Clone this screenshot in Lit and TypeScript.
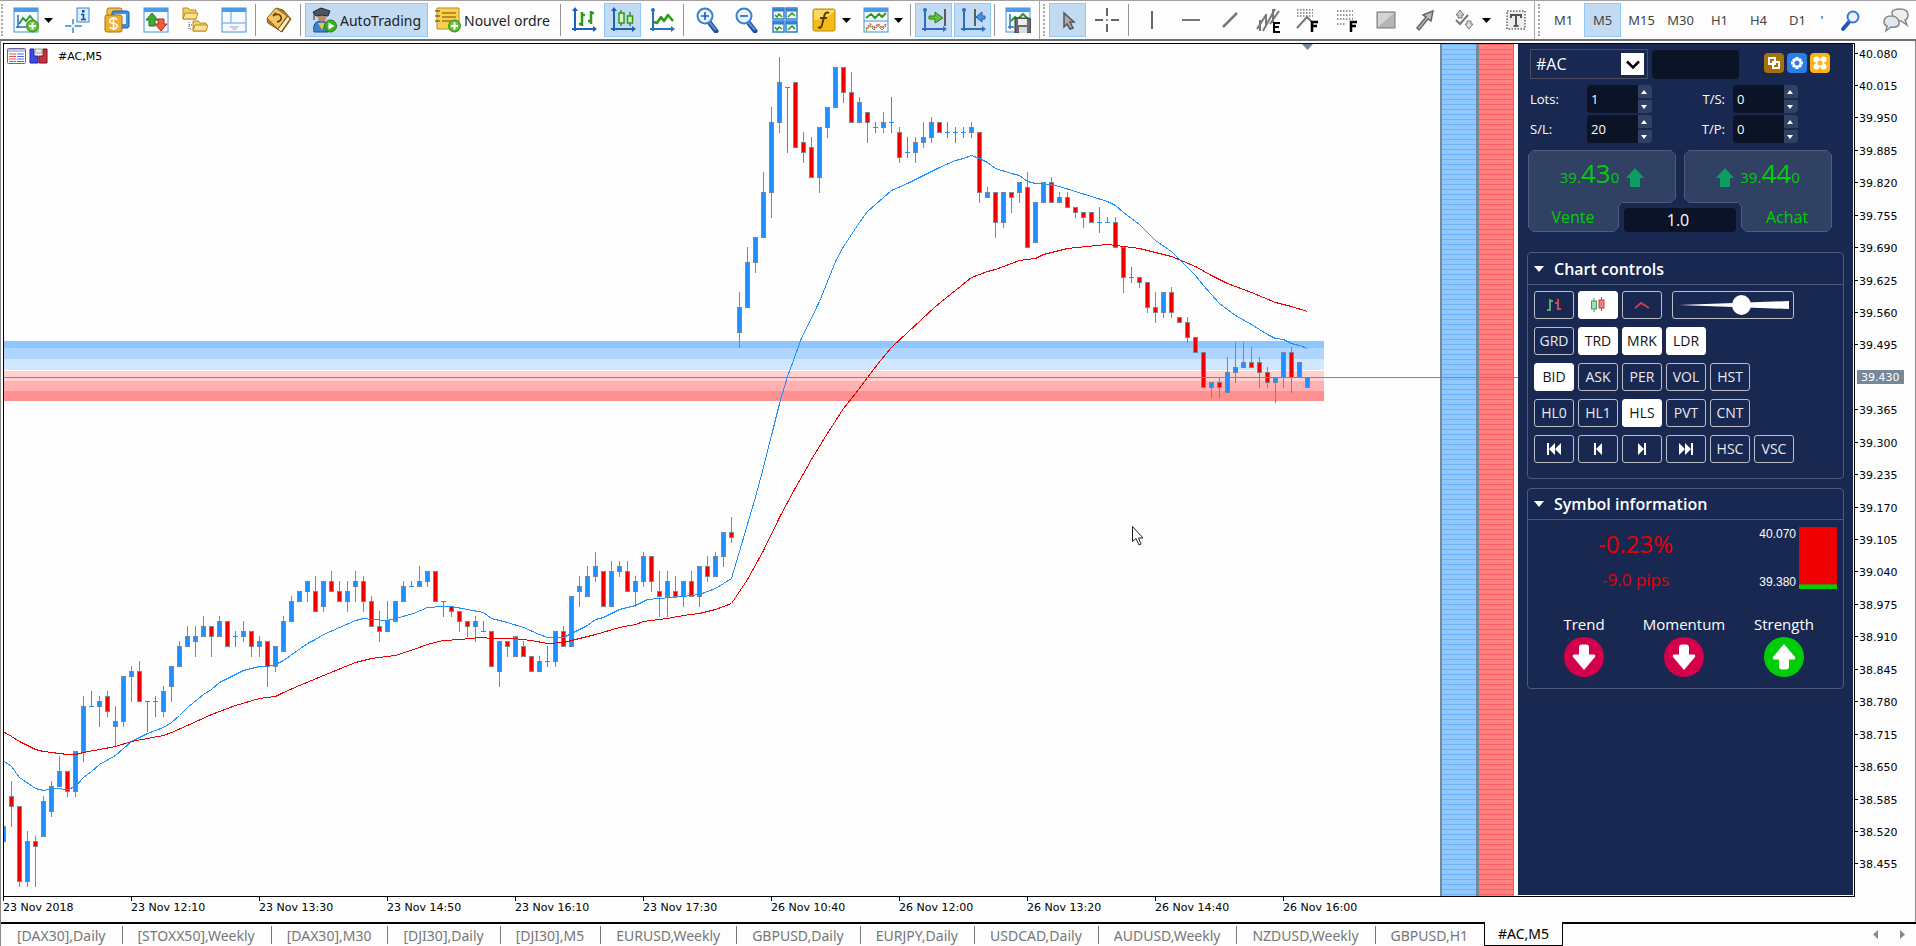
import { LitElement, html, svg, css } from "lit";
import { customElement } from "lit/decorators.js";
import { classMap } from "lit/directives/class-map.js";

/* One candle per 8 px. high, body top, body bottom, low: in ticks of 0.01 below 40.080; U rises, D falls. */
const CANDLES = `155 155 158 158 U|146 149 151 155 D|151 151 166 167 D|156 158 166 167 U|157 158 159 167 D|149 150 157 157 U|146 147 152 153 U|141 144 147 147 U|144 144 148 149 D|140 140 148 149 U
129 131 140 142 U|128 131 131 131 U|129 130 131 135 U|128 129 132 133 D|131 134 135 139 U|125 125 134 135 U|123 124 125 130 U|122 124 130 130 D|130 130 130 136 U|129 130 130 133 U
127 128 132 133 U|123 123 127 130 U|118 119 123 123 U|115 117 119 119 U|115 117 118 121 U|113 115 117 117 U|115 115 117 121 D|113 114 117 117 U|114 114 119 119 D|116 117 117 119 U
114 116 117 118 U|116 116 119 121 D|117 118 119 121 U|118 118 123 127 D|119 119 123 124 U|113 114 120 120 U|109 110 114 114 U|108 108 110 110 U|106 106 108 110 U|105 108 112 112 D
106 106 111 112 U|104 106 108 108 D|106 108 110 110 D|106 108 110 112 U|104 106 107 110 U|105 106 110 112 D|109 110 115 115 D|112 115 116 118 D|110 114 116 116 U|110 110 114 114 U
106 107 110 110 U|106 107 107 107 U|103 106 107 107 U|104 104 106 107 U|104 104 110 110 D|110 110 110 113 U|111 111 112 113 D|112 112 114 116 D|114 114 115 117 D|113 114 115 118 U
114 116 116 116 U|116 116 123 123 D|118 118 124 127 U|118 118 119 121 D|117 117 121 121 U|118 119 121 121 D|121 121 124 124 D|121 122 124 124 U|119 122 122 123 U|116 116 122 123 U
115 116 119 119 D|109 109 119 119 U|105 107 108 111 U|103 105 109 109 U|100 103 105 106 U|104 104 111 111 D|102 104 111 111 U|102 103 104 105 U|102 104 108 108 D|105 106 108 111 U
100 101 106 107 U|101 101 106 108 D|104 108 109 113 D|104 106 109 113 U|105 108 109 109 D|106 106 109 111 U|104 106 109 109 D|103 103 109 111 U|101 103 105 106 D|100 101 105 105 U
96 96 101 103 U|93 96 97 98 D|48 51 56 59 U|39 42 51 51 U|37 37 42 44 U|24 28 37 37 U|11 14 28 33 U|1 6 14 16 U|7 7 7 20 U|6 6 19 19 D
16 18 20 22 D|17 19 25 25 D|15 15 25 28 U|11 11 15 17 U|3 3 11 11 U|3 3 8 10 D|4 8 14 14 D|9 10 14 14 U|12 12 14 18 D|14 15 15 16 U
12 14 15 16 U|9 14 14 16 U|15 16 21 22 D|17 20 20 21 U|17 18 20 22 U|14 17 18 19 U|13 14 17 18 U|14 14 16 16 D|14 16 16 17 U|15 16 16 18 U
15 16 16 17 U|14 15 16 17 U|16 16 28 30 D|27 28 29 29 U|28 28 34 37 D|28 28 34 35 U|28 28 29 32 D|26 26 28 30 U|24 27 39 39 D|30 30 38 38 U
26 26 30 30 U|25 26 30 30 D|28 29 30 30 U|28 29 31 31 D|31 31 32 33 D|32 32 33 35 D|32 32 34 34 D|31 34 34 36 U|33 34 34 34 U|33 34 39 39 D
39 39 45 48 D|43 45 45 46 U|45 45 46 47 D|46 46 51 52 D|48 51 52 54 D|48 48 52 53 U|47 48 52 53 D|53 53 54 54 D|53 54 57 58 D|57 57 60 60 D
60 60 67 67 D|66 66 67 69 U|65 66 67 69 D|61 64 68 68 U|58 63 64 66 U|58 62 63 63 U|59 62 63 63 D|61 62 64 67 D|63 64 66 67 D|65 65 66 70 U
60 60 65 67 U|59 60 65 68 D|62 62 65 65 U|65 65 67 67 U`
  .split(/[|\n]/)
  .map((row) => {
    const p = row.trim().split(" ");
    return { high: +p[0], top: +p[1], bottom: +p[2], low: +p[3], up: p[4] === "U" };
  });

const FAST_MA =
  "4,761 11,766 19,777 35,788 43,790 55,788 67,789 75,786 83,777 91,771 99,764 115,755 131,741 147,733 163,727 171,722 179,715 187,707 203,694 211,689 219,682 243,670 259,666 267,666 275,664 283,660 307,643 315,639 323,634 339,627 355,620 363,618 371,619 387,620 395,618 413,613 427,607 443,606 451,606 467,609 483,612 491,618 507,622 523,627 539,634 547,637 563,637 571,633 587,625 595,619 603,617 619,609 635,605 647,599 659,598 683,596 699,594 707,591 715,588 723,583 731,578 754,500 763,467 771,435 779,403 787,376 793,360 800,340 819,301 835,261 843,246 859,222 867,211 883,197 891,190 907,183 923,175 939,167 955,160 963,158 971,155 979,158 987,162 995,168 1011,173 1019,175 1027,181 1035,183 1043,183 1059,186 1075,191 1091,196 1107,201 1115,205 1123,212 1139,224 1155,240 1171,251 1179,259 1195,275 1203,285 1219,303 1235,315 1251,324 1267,334 1275,338 1283,339 1291,343 1299,345 1307,348";
const SLOW_MA =
  "4,732 11,736 19,741 35,749 43,751 67,754 75,754 83,752 99,749 115,746 131,741 147,738 163,735 171,732 187,725 211,714 235,705 259,698 275,696 283,692 299,685 323,675 355,662 371,658 387,656 395,655 413,649 430,643 443,640 460,639 480,637 493,638 513,638 531,640 547,643 563,642 571,640 595,634 619,627 635,624 643,621 667,618 683,615 699,613 715,609 723,606 731,603 747,579 763,550 780,515 794,489 811,459 825,436 843,408 855,393 867,377 880,360 891,347 907,332 935,306 971,277 987,271 995,269 1019,260 1035,258 1043,254 1067,248 1107,244 1123,246 1139,248 1155,252 1171,256 1195,266 1211,275 1227,283 1251,292 1275,302 1291,306 1307,311";

const BANDS: [number, number, string][] = [
  [341, 7, "#90c6ff"],
  [348, 11, "#b0d6ff"],
  [359, 11, "#d0e7ff"],
  [371, 10, "#ffd0d0"],
  [381, 10, "#ffb0b0"],
  [391, 10, "#ff9090"],
];

const PRICE_TICK = 65;
/* Vertical position of a price given in ticks below 40.080, measured from the window's top. */
const yOf = (ticks: number) => Math.floor(53 + 4.99 * ticks);
const PLOT_LEFT = 4;
const PLOT_TOP = 44;

const LEVELS = Array.from({ length: 26 }, (_, i) => ({ ticks: i * 6.5, label: (40.08 - i * 0.065).toFixed(3) }));
const TIMES = ["23 Nov 2018", "23 Nov 12:10", "23 Nov 13:30", "23 Nov 14:50", "23 Nov 16:10", "23 Nov 17:30", "26 Nov 10:40", "26 Nov 12:00", "26 Nov 13:20", "26 Nov 14:40", "26 Nov 16:00"];
const TABS = ["[DAX30],Daily", "[STOXX50],Weekly", "[DAX30],M30", "[DJI30],Daily", "[DJI30],M5", "EURUSD,Weekly", "GBPUSD,Daily", "EURJPY,Daily", "USDCAD,Daily", "AUDUSD,Weekly", "NZDUSD,Weekly", "GBPUSD,H1", "#AC,M5"];

const plus = svg`<circle cx="19.5" cy="19" r="6.5" fill="#3f9f1c"/><circle cx="19.5" cy="19" r="5" fill="#6cc644"/><path d="M19.5 15.5v7M16 19h7" stroke="#fff" stroke-width="2"/>`;
const windowFrame = svg`<rect x="1" y="1" width="24" height="24" fill="#f4faff" stroke="#4c92d6"/><rect x="1" y="1" width="24" height="4" fill="#4a9be8"/>`;
const axes = svg`<path d="M4 1v23M1 22h23" stroke="#1d62b8" stroke-width="2" fill="none"/><path d="M4 0l-3 4h6zM26 22l-4-3v6z" fill="#1d62b8"/>`;
const axesLow = svg`<path d="M4 3v21M1 22h22" stroke="#2a6fc2" stroke-width="2"/><circle cx="4" cy="3" r="2" fill="#2a6fc2"/><path d="M26 22l-4-3v6z" fill="#2a6fc2"/>`;
const magnifier = svg`<path d="M15 15l7 9" stroke="#1f4f9c" stroke-width="5" stroke-linecap="round"/><path d="M15 15l7 8" stroke="#5d8fd0" stroke-width="2"/><circle cx="11" cy="9" r="7.5" fill="#eaf5ff" stroke="#3b7fd0" stroke-width="2"/>`;

const ICONS: Record<string, unknown> = {
  newChart: svg`${windowFrame}<path d="M5 8v13M3 20h13" stroke="#2a6fb8" stroke-width="1.5"/><path d="M6 17l4-6 3 3 4-5 4 5" fill="none" stroke="#2e9a2e" stroke-width="2"/>${plus}`,
  crosshairInfo: svg`<path d="M8 12v14M0 19h17" stroke="#3c86cc" stroke-width="1.5"/><rect x="6.500" y="17.500" width="3" height="3" fill="#fff"/><rect x="12" y="1" width="12" height="14" fill="#d8edff" stroke="#3c86cc"/><rect x="17" y="3" width="2.500" height="2.500" fill="#0f4fa0"/><path d="M16 7.500h2.500v5M16 12.500h5" stroke="#0f4fa0" stroke-width="1.500" fill="none"/>`,
  marketWatch: svg`<rect x="3" y="1" width="15" height="16" rx="2" fill="#f4c04a" stroke="#b27a10"/><rect x="8" y="4" width="17" height="17" rx="2" fill="#3f8fe6" stroke="#1a5fae"/><rect x="11" y="7" width="11" height="10" fill="#e9f4ff"/><rect x="1" y="8" width="17" height="17" rx="2" fill="#eeb02e" stroke="#ab7208"/><path d="M13 13q-1-2-3.500-2t-3.500 2.500 3.500 3 3.500 3-3.500 2.500-3.500-2M9.500 10v13" fill="none" stroke="#fff" stroke-width="1.600"/>`,
  dataWindow: svg`${windowFrame}<path d="M9 6l6 7h-3v6h-6v-6h-3z" fill="#3cab2e" stroke="#1f7a18"/><path d="M18 24l-6-7h3v-5h6v5h3z" fill="#ef5a3c" stroke="#b82e18"/>`,
  navigator: svg`<path d="M1 1h5l2 2h6v9h-13z" fill="#f2cf62" stroke="#b58d1e"/><path d="M3 6h13l-2 6h-13z" fill="#fae292" stroke="#b58d1e"/><path d="M7 15v7h3M7 18h3" stroke="#555" stroke-dasharray="1 1" fill="none"/><path d="M11 14h5l2 2h6v8h-13z" fill="#f2cf62" stroke="#b58d1e"/><path d="M13 18h13l-2 6h-13z" fill="#fae292" stroke="#b58d1e"/>`,
  terminal: svg`${windowFrame}<path d="M10 5v11M1 16h24" stroke="#8bc0f0" stroke-width="1.500"/><path d="M9 20h9M11 22h5" stroke="#aab" stroke-width="1"/>`,
  tester: svg`<path d="M1 12l9-11 7 2 8 9-9 13-14-9z" fill="#b87c1e" stroke="#7f530e"/><path d="M1 11l9-10 11 8-9 13z" fill="#f2c568" stroke="#9a6a1a"/><path d="M12 22l10-13 2 3-9 13z" fill="#fff3cf" stroke="#8a5c12"/><path d="M7 9l3-3M8 8q6-2 7 2t-4 5" fill="none" stroke="#704400" stroke-width="1.800"/>`,
  auto: svg`<path d="M3 25q-2-11 7-11 7 0 7 8v3z" fill="#3b85d0" stroke="#1c4f8c"/><path d="M7 16l4 7 3-7z" fill="#f2c330"/><circle cx="11" cy="10" r="4.500" fill="#b98b6a"/><path d="M2 5l8-4 9 3-2 5q-6-2-12 0z" fill="#4d5560" stroke="#23282e"/><path d="M3 6v7" stroke="#333"/><circle cx="19.500" cy="19" r="6" fill="#3fae22" stroke="#217d0e"/><path d="M17.500 15.500v7l6-3.500z" fill="#fff"/>`,
  newOrder: svg`<path d="M2 1h22v18l-4 3h-18z" fill="#f7cf52" stroke="#ba8d18"/><path d="M0 4h5M0 9h5M0 14h5" stroke="#8c6a10" stroke-width="1.500"/><path d="M7 6h14M7 10h14M7 14h9" stroke="#a27a12" stroke-width="1.500"/>${plus}`,
  bars: svg`${axes}<path d="M11 5v14M8 17h3M11 8h3M20 4v13M17 14h3M20 6h3" stroke="#2f9a18" stroke-width="2.500"/>`,
  candles: svg`${axes}<path d="M11 3v16M20 5v14" stroke="#2f9a18" stroke-width="1.500"/><rect x="9" y="6" width="5" height="10" fill="#d9f5cf" stroke="#2f9a18" stroke-width="1.500"/><rect x="17.500" y="9" width="5" height="7" fill="#d9f5cf" stroke="#2f9a18" stroke-width="1.500"/>`,
  line: svg`${axesLow}<path d="M5 15l3 1 4-6 3 4 4-6 5 6" fill="none" stroke="#2f9a18" stroke-width="2.500" stroke-linejoin="round"/>`,
  zoomIn: svg`${magnifier}<path d="M11 5v8M7 9h8" stroke="#1f5db8" stroke-width="1.600"/>`,
  zoomOut: svg`${magnifier}<path d="M7 9h8" stroke="#1f5db8" stroke-width="1.600"/>`,
  tile: svg`<path d="M1 1h11v11h-11zM14 1h11v11h-11zM1 14h11v11h-11zM14 14h11v11h-11z" fill="#f0f8ff" stroke="#2f7fd0" stroke-width="1.500"/><path d="M1 3h11M14 3h11M1 16h11M14 16h11" stroke="#2f7fd0" stroke-width="3"/><path d="M3 8l2 2 2-3 3 3M16 10l4-4 3 3M3 20l2 3 2-3 3 2M16 23l4-4 3 3" fill="none" stroke="#2f9a18" stroke-width="1.500"/>`,
  func: svg`<rect x="2" y="2" width="22" height="22" rx="2" fill="#f3bd18" stroke="#b98a08"/><path d="M3 13q10 0 20-8v-2h-20z" fill="#fbd95c"/><path d="M18 6q-4-2-5 4l-2 8q-1 4-4 2M9 11h7" fill="none" stroke="#5b3a00" stroke-width="2"/>`,
  template: svg`${windowFrame}<path d="M1 14h24" stroke="#4c92d6"/><path d="M3 11l5-4 4 4 4-4 3 3 4-4" fill="none" stroke="#2f9a18" stroke-width="2"/><path d="M3 22l4-5 4 4 4-4 4 4 4-4" fill="none" stroke="#e04a3c" stroke-width="1.500" stroke-dasharray="2 1"/><path d="M3 24l4-5 4 4 4-4 4 4 4-4" fill="none" stroke="#2f9a18" stroke-width="1" stroke-dasharray="2 1"/>`,
  scroll: svg`${axesLow}<path d="M24 2v17" stroke="#333" stroke-width="1.500"/><path d="M8 9h6v-4l8 6-8 5v-4h-6z" fill="#63bf3c" stroke="#2c7f14"/>`,
  shift: svg`${axesLow}<path d="M15 2v17" stroke="#333" stroke-width="1.500"/><path d="M25 9h-3v-4l-6 5 6 5v-3h3z" fill="#4d92e0" stroke="#1f5fae"/>`,
  save: svg`${windowFrame}<path d="M5 7v15M3 20h6" stroke="#2a6fb8" stroke-width="1.500"/><path d="M6 14l4-4 3 2 5-5 6 6" fill="none" stroke="#2e9a2e" stroke-width="2"/><path d="M10 11h14l2 2v13h-16z" fill="#686c70" stroke="#33373b"/><rect x="13" y="12" width="9" height="6" fill="#eee"/><rect x="14" y="20" width="8" height="6" fill="#ddd"/>`,
  pointer: svg`<path d="M9 6v14l3-3 3 5 3-1-3-6h4z" fill="#aaa" stroke="#555" stroke-width="1.500"/>`,
  cross: svg`<path d="M13 1v8M13 17v8M1 13h8M17 13h8" stroke="#666" stroke-width="2"/><path d="M13 12v2M12 13h2" stroke="#666"/>`,
  vline: svg`<path d="M13 4v18" stroke="#666" stroke-width="2"/>`,
  hline: svg`<path d="M4 13h18" stroke="#777" stroke-width="2"/>`,
  trend: svg`<path d="M6 20l14-14" stroke="#777" stroke-width="2.500"/>`,
  channel: svg`<path d="M1 22l9-14M7 24l12-22M14 17l9-13M4 13v11M10 7v11M17 2v14" stroke="#777" stroke-width="2" fill="none"/><path d="M24 16h-6v9h6M18 20h5" fill="none" stroke="#000" stroke-width="2"/>`,
  fan: svg`<path d="M2 3h16M2 6h16M2 9h16" stroke="#777" stroke-width="1.500" stroke-dasharray="1.500 1.500"/><path d="M2 21l10-11 5 5" stroke="#777" stroke-width="2" fill="none"/><path d="M23 15h-6v10M17 19h5" fill="none" stroke="#000" stroke-width="2.500"/>`,
  fibo: svg`<path d="M3 4h16M3 8h16M3 12h16M3 17h9" stroke="#777" stroke-width="1.500" stroke-dasharray="1.500 1.500"/><path d="M23 15h-6v10M17 19h5" fill="none" stroke="#000" stroke-width="2.500"/>`,
  rect: svg`<rect x="4" y="5" width="18" height="16" fill="#b5b5b5" stroke="#777"/><path d="M5 20v-14h16z" fill="#d4d4d4"/>`,
  arrow: svg`<path d="M5 21l9-11-3-2 10-4-2 10-3-2-9 11z" fill="#bbb" stroke="#666" stroke-width="1.500"/>`,
  shapes: svg`<path d="M9 3l4 5h-2v3h-4v-3h-2z" fill="#ccc" stroke="#777"/><path d="M5 13l4 4 8-9" fill="none" stroke="#777" stroke-width="2"/><path d="M18 22l-4-5h2v-3h4v3h2z" fill="#ddd" stroke="#777"/>`,
  text: svg`<rect x="4" y="4" width="18" height="18" fill="#eee" stroke="#666" stroke-width="1.500" stroke-dasharray="1.500 1.500"/><path d="M8 11v-3h10v3M13 8v11M10.500 19h5" fill="none" stroke="#555" stroke-width="2"/>`,
  search: svg`<path d="M10 15l-6 7" stroke="#2458b8" stroke-width="4" stroke-linecap="round"/><circle cx="14" cy="10" r="5.500" fill="#e8f3ff" stroke="#3a78d8" stroke-width="2"/>`,
  chat: svg`<path d="M9 5q1-3 8-3 8 0 8 6 0 4-3 5l2 5-6-4q-9 0-9-9z" fill="#eee" stroke="#888" stroke-width="1.500"/><path d="M1 15q0-6 7-6t8 6-8 5l-5 4 1-5q-3-1-3-4z" fill="#dfe8f2" stroke="#888" stroke-width="1.500"/>`,
};

const icon = (name: string) => html`<svg class="icon" viewBox="0 0 26 26" aria-hidden="true">${ICONS[name]}</svg>`;
const tool = (name: string, label: string, active = false) =>
  html`<button class=${classMap({ tool: true, active })} aria-label=${label}>${icon(name)}</button>`;
const dropTool = (name: string, label: string) =>
  html`<button class="tool drop" aria-label=${label}>${icon(name)}<svg class="caret" viewBox="0 0 9 5" aria-hidden="true"><path d="M0 0h9l-4.500 5z"/></svg></button>`;
const sep = html`<span class="sep"></span>`;

@customElement("trade-toolbar")
export class TradeToolbar extends LitElement {
  static styles = css`
    :host { display: flex; align-items: center; height: 41px; flex: none; box-sizing: border-box; border-top: 1px solid #a3a0a3; border-bottom: 2px solid #707070; background: #fdfdfd; }
    .group { display: flex; align-items: center; gap: 2px; height: 100%; padding-left: 7px; flex: none; position: relative; }
    .group.next { border-left: 1px solid #a8a8a8; padding-left: 9px; }
    .group.first { padding-right: 3px; }
    .group.times { padding-left: 10px; }
    .group::before { content: ""; position: absolute; left: 1px; top: 3px; bottom: 3px; border-left: 2px dotted #aaa; }
    .group.next::before { left: 3px; }
    button { font: 15px "Noto Sans", sans-serif; color: #222; background: none; border: 1px solid transparent; padding: 0; margin: 0; height: 34px; box-sizing: border-box; white-space: nowrap; }
    .tool { width: 37px; display: flex; align-items: center; justify-content: center; }
    .drop { width: 50px; justify-content: flex-start; padding-left: 5px; }
    .icon { width: 26px; height: 26px; flex: none; }
    .caret { width: 9px; height: 5px; margin-left: 5px; }
    .active { background: #c2dbf2; border-color: #90c8f8; }
    .wide { display: flex; align-items: center; gap: 3px; padding: 0 5px; font-size: 14px; }
    .auto { width: 123px; }
    .order { width: 127px; padding: 0 4px; }
    .sep { width: 1px; height: 32px; margin: 0 2px 0 1px; background: #949494; }
    .time { width: 37px; font: 13px "Noto Sans", sans-serif; color: #444; }
    .more { width: 8px; }
    .tail { margin-left: auto; padding: 0; gap: 16px; padding-right: 6px; }
    .tail::before { display: none; }
    .tail .tool { width: 28px; }
  `;
  render() {
    return html`
      <div class="group first">
        ${dropTool("newChart", "New chart")}${tool("crosshairInfo", "Data window")}${tool("marketWatch", "Market watch")}${tool("dataWindow", "Symbols")}${tool("navigator", "Navigator")}${tool("terminal", "Terminal")}
        ${sep}${tool("tester", "Strategy tester")}${sep}
        <button class="wide auto active">${icon("auto")}<span>AutoTrading</span></button>
        <button class="wide order">${icon("newOrder")}<span>Nouvel ordre</span></button>
        ${sep}${tool("bars", "Bar chart")}${tool("candles", "Candlesticks", true)}${tool("line", "Line chart")}
        ${sep}${tool("zoomIn", "Zoom in")}${tool("zoomOut", "Zoom out")}${tool("tile", "Tile windows")}${dropTool("func", "Indicators")}${dropTool("template", "Templates")}
        ${sep}${tool("scroll", "Auto scroll", true)}${tool("shift", "Chart shift", true)}${sep}${tool("save", "Save chart")}
      </div>
      <div class="group next">
        ${tool("pointer", "Cursor", true)}${tool("cross", "Crosshair")}${sep}${tool("vline", "Vertical line")}${tool("hline", "Horizontal line")}${tool("trend", "Trendline")}${tool("channel", "Channel")}${tool("fan", "Fibonacci fan")}${tool("fibo", "Fibonacci retracement")}${tool("rect", "Rectangle")}${tool("arrow", "Arrow")}${dropTool("shapes", "Shapes")}${tool("text", "Text label")}
      </div>
      <div class="group next times">
        ${["M1", "M5", "M15", "M30", "H1", "H4", "D1"].map((t) => html`<button class=${classMap({ time: true, active: t === "M5" })}>${t}</button>`)}
        <button class="time more" aria-label="W1">'</button>
      </div>
      <div class="group tail">${tool("search", "Search")}${tool("chat", "Chat")}</div>
    `;
  }
}

@customElement("price-chart")
export class PriceChart extends LitElement {
  static styles = css`
    :host { display: block; flex: 1; min-width: 0; position: relative; overflow: hidden; }
    .canvas { position: absolute; inset: 0; width: 100%; height: 100%; }
    .head { position: relative; display: flex; align-items: center; gap: 3px; padding: 4px 0 0 3px; height: 16px; font: 11px "DejaVu Sans", sans-serif; color: #000; }
    .head button { padding: 0; border: 0; background: none; width: 19px; height: 16px; }
    .head svg { display: block; width: 19px; height: 16px; }
    .head span { margin-left: 7px; }
  `;
  render() {
    return html`
      <svg class="canvas" role="img" aria-label="#AC,M5">
        <g transform="translate(${-PLOT_LEFT} ${-PLOT_TOP})" shape-rendering="crispEdges">
          ${BANDS.map(([y, h, fill]) => svg`<rect x="4" y=${y} width="1320" height=${h} fill=${fill}/>`)}
          ${CANDLES.map((c, i) => {
            const x = 3 + 8 * i;
            const high = yOf(c.high), low = yOf(c.low), top = yOf(c.top), bottom = yOf(c.bottom);
            if (c.top === c.bottom)
              return svg`<rect x=${x} y=${high} width="1" height=${low - high + 1} fill="#1e90ff"/><rect x=${x - 2} y=${top} width="5" height="1" fill="#1e90ff"/>`;
            return svg`<rect x=${x} y=${high} width="1" height=${low - high + 1} fill="#778899"/><rect x=${x - 2} y=${top} width="5" height=${bottom - top + 1} fill="#778899"/><rect x=${x - 1} y=${top + 1} width="3" height=${bottom - top - 1} fill=${c.up ? "#1e90ff" : "#f00000"}/>`;
          })}
          <polyline points=${FAST_MA} fill="none" stroke="#1e90ff" transform="translate(0.5 0.5)"/>
          <polyline points=${SLOW_MA} fill="none" stroke="#e80000" transform="translate(0.5 0.5)"/>
        </g>
        <g transform="translate(${-PLOT_LEFT} ${-PLOT_TOP})">
          <path d="M1302 44h11l-5.500 6z" fill="#778899"/>
          <path d="M1132.500 526.500v15l3.500-3 3 6.500 2-1-2.500-6h4.500z" fill="#fff" stroke="#222"/>
        </g>
      </svg>
      <div class="head">
        <button aria-label="Quick trade panel"><svg viewBox="0 0 19 16"><rect x=".5" y=".5" width="18" height="15" rx="1" fill="#fff" stroke="#668"/><rect x="1" y="1" width="17" height="3" fill="#b9c4ec"/><path d="M2 6h7M2 8.500h7M2 11h7M2 13.500h7" stroke="#e05050"/><path d="M10 6h7M10 8.500h7M10 11h7M10 13.500h7" stroke="#5068e0"/></svg></button>
        <button aria-label="Depth of market"><svg viewBox="0 0 19 16"><path d="M1 1h4v7h4v7h-8z" fill="#4048e8" stroke="#1a20a0"/><path d="M18 1h-4v7h-4v7h8z" fill="#c83040" stroke="#7a1020"/><rect x="6" y="1" width="7" height="4" fill="#eee" stroke="#999"/></svg></button>
        <span>#AC,M5</span>
      </div>
    `;
  }
}

const field = (id: string, label: string, value: string) => html`
  <div class="field">
    <label for=${id}>${label}</label>
    <input id=${id} type="text" inputmode="decimal" .value=${value} />
    <span class="spin">
      <button aria-label="Increase ${label}"><svg viewBox="0 0 6 4"><path d="M0 4h6l-3-4z"/></svg></button>
      <button aria-label="Decrease ${label}"><svg viewBox="0 0 6 4"><path d="M0 0h6l-3 4z"/></svg></button>
    </span>
  </div>`;

const step = (d: string, label: string) =>
  html`<button class="key" aria-label=${label}><svg class="step" viewBox="0 0 16 12"><path d=${d}/></svg></button>`;
const keys = (names: string[], on: string[]) => names.map((n) => html`<button class=${classMap({ key: true, on: on.includes(n) })}>${n}</button>`);

const arrowUp = html`<svg class="up" viewBox="0 0 18 19" aria-hidden="true"><path d="M9 0l9 10h-4v9h-10v-9h-4z"/></svg>`;

@customElement("trade-panel")
export class TradePanel extends LitElement {
  static styles = css`
    :host { display: block; flex: none; width: 335px; box-sizing: border-box; padding: 5px 9px 0; background: #182851; color: #fff; font: 13px/20px "Open Sans", sans-serif; margin: 0 1px 1px 0; }
    button, input, select { font: inherit; color: inherit; margin: 0; padding: 0; border: 0; box-sizing: border-box; }
    .top { display: flex; align-items: flex-start; padding-left: 3px; }
    .symbol { position: relative; width: 118px; height: 30px; }
    .symbol select { width: 100%; height: 100%; appearance: none; background: #182851; border: 1px solid #4c4d5c; padding-left: 5px; font-size: 16px; }
    .symbol svg { position: absolute; right: 4px; top: 4px; width: 23px; height: 22px; pointer-events: none; }
    .search { width: 87px; height: 29px; margin: 1px 0 0 4px; padding: 0 6px; border-radius: 4px; background: #0b1327; }
    .actions { display: flex; gap: 3px; margin: 4px 0 0 25px; }
    .actions button { width: 20px; height: 20px; border-radius: 4px; }
    .actions svg { display: block; width: 20px; height: 20px; }
    .copy { background: #a87008; } .gear { background: #2a7fe6; } .puzzle { background: #fcb515; }
    .fields { display: grid; grid-template-columns: 147px 120px; gap: 2px 1px; margin-top: 6px; padding-left: 3px; }
    .field { display: flex; height: 28px; align-items: center; justify-content: flex-end; }
    .field:nth-child(odd) { padding-right: 25px; }
    .field:nth-child(odd) label { flex: 1; }
    .field:nth-child(even) label { margin-right: 8px; }
    .field input { width: 51px; height: 28px; padding-left: 4px; border-radius: 4px 0 0 4px; background: #0b1327; font-size: 13px; }
    .spin { display: grid; grid-template-rows: 13px 13px; gap: 2px; width: 14px; }
    .spin button { background: #304163; display: flex; align-items: center; justify-content: center; padding-right: 2px; }
    .spin button:first-child { border-radius: 0 4px 0 0; } .spin button:last-child { border-radius: 0 0 4px 0; }
    .spin svg { width: 6px; height: 4px; fill: #fff; }
    .quotes { position: relative; display: flex; gap: 8px; margin: 7px 0 0 1px; }
    .quote { position: relative; width: 148px; height: 82px; background: none; color: #00cc08; display: flex; flex-direction: column; }
    .quote .shape { position: absolute; inset: 0; width: 148px; height: 82px; }
    .price { position: relative; display: flex; align-items: baseline; justify-content: center; width: 100%; height: 53px; line-height: 47px; font-size: 15px; }
    .price b { font-weight: 400; font-size: 26px; }
    .up { width: 18px; height: 19px; fill: #0b9f62; margin: 0; position: relative; top: 4px; }
    .sell .up { margin-left: 7px; }
    .buy .up { margin-right: 6px; }
    .side { position: relative; width: 90px; font-size: 16px; line-height: 28px; text-align: center; }
    .buy .side { align-self: flex-end; }
    .volume { position: absolute; left: 96px; top: 58px; width: 112px; height: 24px; padding-right: 4px; border-radius: 4px; background: #0b1327; text-align: center; font-size: 16px; }
    .box { border: 1px solid #4a5a78; border-radius: 4px; box-sizing: border-box; width: 317px; }
    .box.controls { margin-top: 20px; height: 227px; }
    .box.info { margin-top: 9px; height: 201px; }
    h2 { margin: 0; height: 30px; padding-top: 1px; box-sizing: content-box; line-height: 30px; display: flex; align-items: center; border-bottom: 1px solid #4a5a78; font-size: 16px; font-weight: 600; gap: 10px; padding-left: 6px; }
    .info h2 { padding-top: 0; }
    h2 svg { width: 10px; height: 6px; fill: #fff; }
    .keys { display: flex; flex-direction: column; gap: 8px; padding: 6px 6px; }
    .row { display: flex; gap: 4px; }
    .key { width: 40px; height: 28px; border: 1px solid #b9bcc4; border-radius: 3px; background: #182851; color: #e8eaf0; font-size: 14px; line-height: 26px; display: flex; align-items: center; justify-content: center; }
    .key.on { background: #fff; color: #111; border-color: #fff; }
    .key svg { width: 18px; height: 16px; }
    .key svg.step { width: 16px; height: 12px; fill: #fff; }
    .zoom { position: relative; display: block; width: 122px; height: 28px; margin-left: 6px; border: 1px solid #b9bcc4; border-radius: 3px; box-sizing: border-box; }
    .zoom svg { position: absolute; left: 6px; top: 9px; width: 110px; height: 8px; }
    .zoom input { position: absolute; left: 5px; top: 3px; width: 110px; height: 20px; appearance: none; background: none; }
    .zoom input::-webkit-slider-thumb { appearance: none; width: 19px; height: 20px; border-radius: 50%; background: #fff; }
    .stats { display: flex; padding: 7px 6px 0; height: 62px; }
    .change { flex: 1; text-align: center; color: #e80000; }
    .pct { font-size: 24px; line-height: 34px; }
    .pips { font-size: 17px; line-height: 38px; }
    .range { width: 62px; display: flex; flex-direction: column; justify-content: space-between; padding: 0 3px 0 0; box-sizing: border-box; font: 12px/14px "Liberation Sans", sans-serif; text-align: right; }
    .gauge { width: 38px; background: linear-gradient(#ee0000 57px, #5a7a00 57px 58px, #00cc08 58px); }
    .signals { display: grid; grid-template-columns: repeat(3, 100px); margin: 25px 0 0 6px; text-align: center; font-size: 15px; }
    .signals svg { display: block; width: 40px; height: 40px; margin: 3px auto 0; }
  `;
  render() {
    return html`
      <div class="top">
        <span class="symbol">
          <select aria-label="Symbol"><option>#AC</option></select>
          <svg viewBox="0 0 23 22"><rect width="23" height="22" fill="#fff"/><path d="M6 8.500l6 6 6-6" fill="none" stroke="#000" stroke-width="2.500"/></svg>
        </span>
        <input class="search" type="text" aria-label="Search symbol" />
        <div class="actions">
          <button class="copy" aria-label="Copy"><svg viewBox="0 0 20 20"><path d="M5 5h6v6h-6zM9 9h6v6h-6z" fill="none" stroke="#fff" stroke-width="2"/></svg></button>
          <button class="gear" aria-label="Settings"><svg viewBox="0 0 20 20"><path d="M10 4v12M4 10h12M6 6l8 8M14 6l-8 8" stroke="#fff" stroke-width="3"/><circle cx="10" cy="10" r="4.500" fill="#fff"/><circle cx="10" cy="10" r="2.500" fill="#2a7fe6"/></svg></button>
          <button class="puzzle" aria-label="Layout"><svg viewBox="0 0 20 20"><circle cx="6.500" cy="6.500" r="3" fill="#fff"/><circle cx="13.500" cy="6.500" r="3" fill="#fff"/><circle cx="6.500" cy="13.500" r="3" fill="#fff"/><circle cx="13.500" cy="13.500" r="3" fill="#fff"/><rect x="6" y="6" width="8" height="8" fill="#fff"/><circle cx="10" cy="10" r="2.500" fill="#fcb515"/></svg></button>
        </div>
      </div>
      <div class="fields">
        ${field("lots", "Lots:", "1")}${field("ts", "T/S:", "0")}${field("sl", "S/L:", "20")}${field("tp", "T/P:", "0")}
      </div>
      <div class="quotes">
        <button class="quote sell">
          <svg class="shape" viewBox="0 0 148 82"><path d="M5 .5h138l4.500 4.500v43l-4.500 4.500h-49l-3.500 3.500v21l-4.500 4.500h-81l-4.500-4.500v-72z" fill="#304163" stroke="#4d5d7b"/></svg>
          <span class="price">39.<b>43</b>0${arrowUp}</span><span class="side">Vente</span>
        </button>
        <button class="quote buy">
          <svg class="shape" viewBox="0 0 148 82"><path d="M143 .5h-138l-4.500 4.500v43l4.500 4.500h49l3.500 3.500v21l4.500 4.500h81l4.500-4.500v-72z" fill="#304163" stroke="#4d5d7b"/></svg>
          <span class="price">${arrowUp}39.<b>44</b>0</span><span class="side">Achat</span>
        </button>
        <input class="volume" type="text" aria-label="Volume" .value=${"1.0"} />
      </div>
      <section class="box controls">
        <h2><svg viewBox="0 0 10 6"><path d="M0 0h10l-5 6z"/></svg>Chart controls</h2>
        <div class="keys">
          <div class="row">
            <button class="key" aria-label="Bars"><svg viewBox="0 0 18 16"><path d="M5 2v12M2 13h3M5 4h3" stroke="#5aa678" stroke-width="2"/><path d="M13 2v11M10 6h3M13 12h3" stroke="#d04848" stroke-width="2"/></svg></button>
            <button class="key on" aria-label="Candles"><svg viewBox="0 0 18 16"><path d="M5 1v14" stroke="#3c9a5c"/><rect x="2.500" y="4" width="5" height="8" fill="#a9dcb6" stroke="#3c9a5c"/><path d="M12.500 0v14" stroke="#c83a3a"/><rect x="10" y="3" width="5" height="8" fill="#f08080" stroke="#c83a3a"/></svg></button>
            <button class="key" aria-label="Line"><svg viewBox="0 0 18 16"><path d="M2 11l6-5 8 5" fill="none" stroke="#d03c50" stroke-width="2"/></svg></button>
            <label class="zoom"><svg viewBox="0 0 110 8"><path d="M0 4l110-4v8z" fill="#fff"/></svg><input type="range" min="0" max="100" .value=${"59"} aria-label="Zoom" /></label>
          </div>
          <div class="row">${keys(["GRD", "TRD", "MRK", "LDR"], ["TRD", "MRK", "LDR"])}</div>
          <div class="row">${keys(["BID", "ASK", "PER", "VOL", "HST"], ["BID"])}</div>
          <div class="row">${keys(["HL0", "HL1", "HLS", "PVT", "CNT"], ["HLS"])}</div>
          <div class="row">
            ${step("M1 0h2v12h-2zM9 0v12l-6-6zM15 0v12l-6-6z", "First")}${step("M4 0h2v12h-2zM12 0v12l-6-6z", "Previous")}${step("M10 0h2v12h-2zM4 0v12l6-6z", "Next")}${step("M13 0h2v12h-2zM7 0v12l6-6zM1 0v12l6-6z", "Last")}
            ${keys(["HSC", "VSC"], [])}
          </div>
        </div>
      </section>
      <section class="box info">
        <h2><svg viewBox="0 0 10 6"><path d="M0 0h10l-5 6z"/></svg>Symbol information</h2>
        <div class="stats">
          <div class="change"><div class="pct">-0.23%</div><div class="pips">-9.0 pips</div></div>
          <div class="range"><span>40.070</span><span>39.380</span></div>
          <div class="gauge"></div>
        </div>
        <div class="signals">
          ${[["Trend", false], ["Momentum", false], ["Strength", true]].map(
            ([name, up]) => html`<div>${name}<svg viewBox="0 0 40 40"><circle cx="20" cy="20" r="20" fill=${up ? "#00cc08" : "#d4004c"}/><path d=${up ? "M20 7l11 13q1 3-2 2.500h-4v7q0 3-3 3h-4q-3 0-3-3v-7h-4q-3 .5-2-2.500z" : "M20 33l-11-13q-1-3 2-2.500h4v-7q0-3 3-3h4q3 0 3 3v7h4q3-.5 2 2.500z"} fill="#fff"/></svg></div>`
          )}
        </div>
      </section>
    `;
  }
}

@customElement("app-root")
export class AppRoot extends LitElement {
  static styles = css`
    :host { display: flex; flex-direction: column; height: 100vh; box-sizing: border-box; background: #fdfdfd; font-family: "DejaVu Sans", sans-serif; color: #000; overflow: hidden; }
    .window { flex: 1; min-height: 0; display: flex; border-left: 1px solid #888; border-right: 1px solid #888; }
    .stage { flex: 1; min-width: 0; display: flex; flex-direction: column; padding: 2px 0 0 2px; }
    .plot { flex: 1; min-height: 0; display: flex; position: relative; border: 1px solid #000; }
    .ladder { flex: none; width: 74px; box-sizing: border-box; display: flex; gap: 3px; margin-right: 4px; border: solid #778899; border-width: 0 1px 0 2px; background: #778899; }
    .ladder i { flex: 1; }
    .bids { background: repeating-linear-gradient(#6cb2fb 0 1px, #90c8ff 1px 5px); }
    .asks { background: repeating-linear-gradient(#ff5c5c 0 1px, #ff8080 1px 5px); }
    .bid-line { position: absolute; left: 0; right: 336px; height: 1px; background: #778899; }
    .prices { flex: none; width: 60px; height: 100%; font-size: 11px; shape-rendering: crispEdges; }
    .times { flex: none; display: flex; height: 25px; }
    .times span { flex: none; width: 128px; font-size: 11px; line-height: 22px; white-space: nowrap; position: relative; box-sizing: border-box; }
    .times span::before { content: ""; position: absolute; left: 0; top: 0; width: 1px; height: 4px; background: #000; }
    nav { flex: none; height: 24px; display: flex; align-items: stretch; border-left: 1px solid #888; font: 14px "Noto Sans", sans-serif; }
    nav a { display: flex; align-items: center; flex: none; padding: 0 16px; color: #777; text-decoration: none; border-top: 2px solid #000; box-sizing: border-box; position: relative; white-space: nowrap; }
    nav a + a::before { content: ""; position: absolute; left: 0; top: 2px; bottom: 2px; width: 1px; background: #777; }
    nav a.current { color: #000; border: solid #000; border-width: 0 1px 1px; padding: 0 13px; }
    nav a.current::before { display: none; }
    .rest { flex: 1; border-top: 2px solid #000; display: flex; justify-content: flex-end; gap: 21px; align-items: center; padding-right: 10px; }
    .rest button { border: 0; background: none; padding: 0; width: 6px; height: 10px; display: flex; }
    .rest svg { width: 5px; height: 9px; fill: #888; }
  `;
  render() {
    return html`
      <trade-toolbar></trade-toolbar>
      <div class="window">
        <div class="stage">
          <div class="plot">
            <price-chart></price-chart>
            <div class="ladder"><i class="bids"></i><i class="asks"></i></div>
            <trade-panel></trade-panel>
            <div class="bid-line" style="top:${yOf(PRICE_TICK) - PLOT_TOP}px"></div>
          </div>
          <div class="times">${TIMES.map((t) => html`<span>${t}</span>`)}</div>
        </div>
        <svg class="prices">
          <g transform="translate(0 -41)">
            ${LEVELS.map((l) =>
              l.ticks === PRICE_TICK
                ? svg`<rect x="2" y=${yOf(l.ticks) - 7} width="47" height="14" fill="#778899"/><text x="6" y=${yOf(l.ticks) + 4} fill="#fff">${l.label}</text>`
                : svg`<rect x="0" y=${yOf(l.ticks)} width="3" height="1"/><text x="4" y=${yOf(l.ticks) + 5}>${l.label}</text>`
            )}
          </g>
        </svg>
      </div>
      <nav>
        ${TABS.map((t, i) => html`<a href="#" class=${classMap({ current: i === TABS.length - 1 })}>${t}</a>`)}
        <div class="rest">
          <button aria-label="Scroll left"><svg viewBox="0 0 5 9"><path d="M5 0v9l-5-4.500z"/></svg></button>
          <button aria-label="Scroll right"><svg viewBox="0 0 5 9"><path d="M0 0v9l5-4.500z"/></svg></button>
        </div>
      </nav>
    `;
  }
}
